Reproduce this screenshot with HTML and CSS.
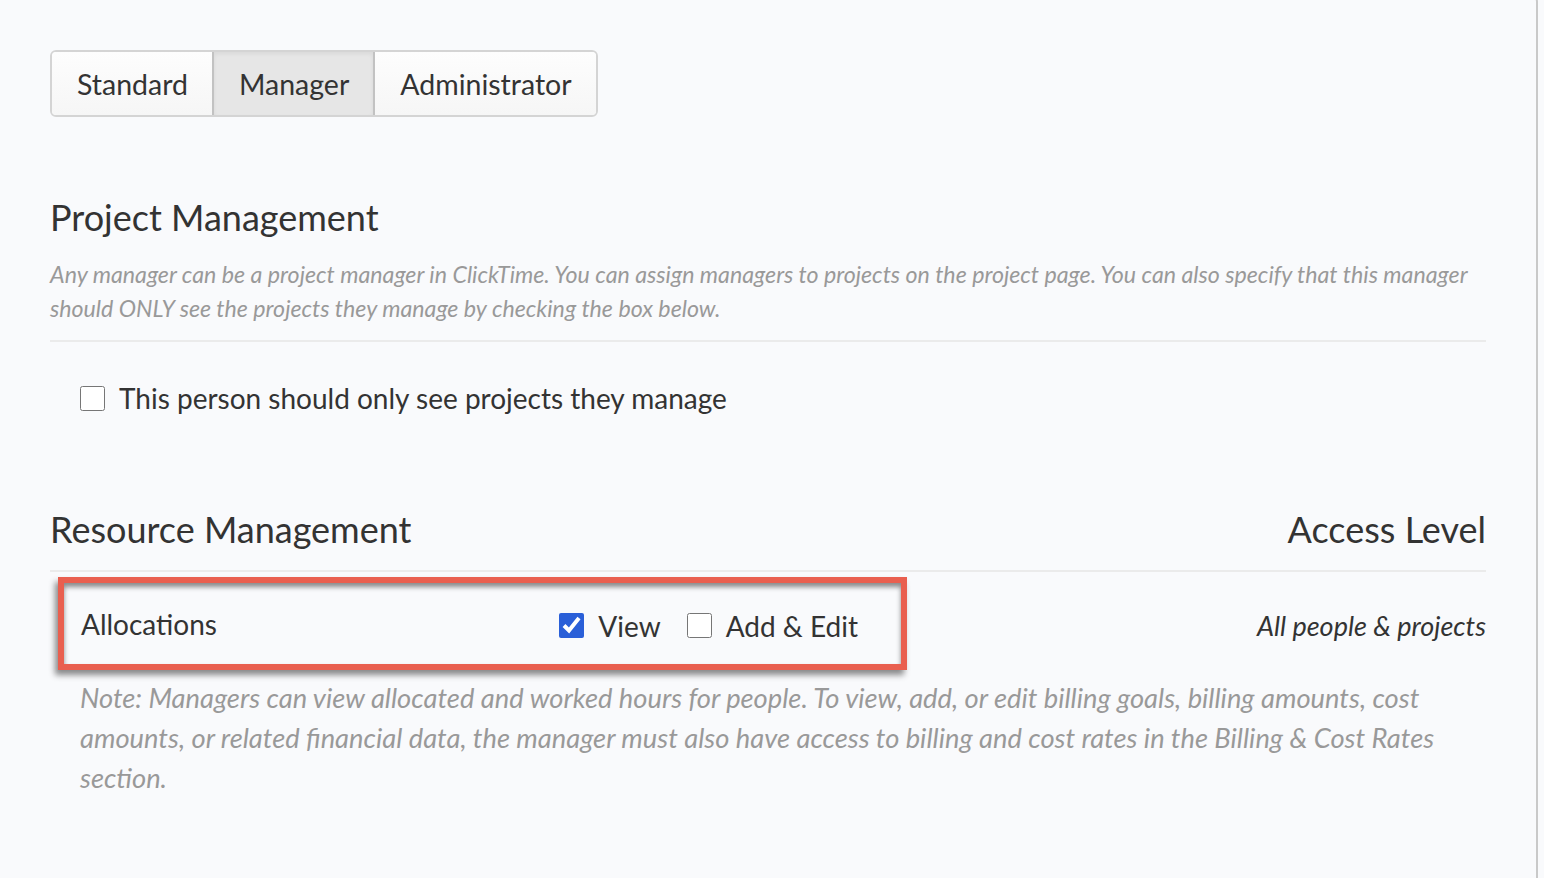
FILE: index.html
```html
<!DOCTYPE html>
<html lang="en-us">

<head>
<meta charset="utf-8">
<title>Manager Permissions</title>
<link rel="stylesheet" href="styles.css">
</head>

<body>

<div class="panel">

    <div class="roleTabs">
        <button class="roleTab">Standard</button>
        <button class="roleTab active">Manager</button>
        <button class="roleTab">Administrator</button>
    </div>

    <section class="permSection projectSection">
        <h2 class="sectionTitle">Project Management</h2>
        <p class="sectionHelp">Any manager can be a project manager in ClickTime. You can assign managers to projects on the project page. You can also specify that this manager should ONLY see the projects they manage by checking the box below.</p>
        <label class="checkRow">
            <input type="checkbox" class="box">
            <span>This person should only see projects they manage</span>
        </label>
    </section>

    <section class="permSection resourceSection">
        <div class="sectionHead">
            <h2 class="sectionTitle">Resource Management</h2>
            <h2 class="sectionTitle">Access Level</h2>
        </div>
        <div class="permRow">
            <div class="highlight">
                <span class="permName">Allocations</span>
                <div class="permOptions">
                    <label class="option">
                        <input type="checkbox" class="box" checked>
                        <span>View</span>
                    </label>
                    <label class="option">
                        <input type="checkbox" class="box">
                        <span>Add &amp; Edit</span>
                    </label>
                </div>
            </div>
            <span class="accessLevel">All people &amp; projects</span>
        </div>
        <p class="permNote">Note: Managers can view allocated and worked hours for people. To view, add, or edit billing goals, billing amounts, cost amounts, or related financial data, the manager must also have access to billing and cost rates in the Billing &amp; Cost Rates section.</p>
    </section>

</div>

</body>

</html>
```

FILE: styles.css
```css
html, body {
    margin: 0;
    padding: 0;
    background-color: #f9fafc;
}
body {
    font-family: Lato, "Open Sans", sans-serif;
    color: #333;
    overflow: hidden;
}
.panel {
    box-sizing: border-box;
    width: 1538px;
    height: 886px;
    margin-top: -8px;
    padding: 56px 50px 0 50px;
    border-top: 2px solid #c9c9c9;
    border-right: 2px solid #c9c9c9;
    border-top-right-radius: 10px;
    background-color: #f9fafc;
}

/* role switcher */
.roleTabs {
    display: inline-flex;
    border: 2px solid #d4d4d4;
    border-radius: 6px;
    overflow: hidden;
    background-color: #fbfbfb;
}
.roleTab {
    font-family: Lato, sans-serif;
    font-size: 28.5px;
    color: #333;
    height: 63px;
    padding: 0 24px 0 25px;
    border: none;
    border-left: 2px solid #c2c2c2;
    background: linear-gradient(#fdfdfd, #f6f6f6);
}
.roleTab:first-child {
    border-left: none;
}
.roleTab.active {
    background: #e6e6e6;
    box-shadow: inset 0 2px 4px rgba(0, 0, 0, 0.06);
}

/* sections */
.permSection {
    width: 1436px;
}
.projectSection {
    margin-top: 80px;
}
.sectionTitle {
    font-size: 36px;
    font-weight: normal;
    color: #333;
    margin: 0;
    line-height: 40px;
}
.sectionHelp {
    font-size: 23.2px;
    font-style: italic;
    color: #999;
    line-height: 34px;
    margin: 20px 0 0 0;
    padding-bottom: 15px;
    border-bottom: 2px solid #ebebeb;
}
.checkRow {
    display: flex;
    align-items: center;
    gap: 14px;
    margin-top: 39px;
    padding-left: 30px;
    font-size: 28px;
}
.box {
    width: 25px;
    height: 25px;
    margin: 0;
    accent-color: #2a5fd8;
}

.resourceSection {
    margin-top: 94px;
}
.sectionHead {
    display: flex;
    justify-content: space-between;
    padding-bottom: 21px;
    border-bottom: 2px solid #ebebeb;
}
.permRow {
    display: flex;
    justify-content: space-between;
    align-items: center;
    margin-top: 5px;
}
.highlight {
    box-sizing: border-box;
    display: flex;
    align-items: center;
    justify-content: space-between;
    width: 849px;
    height: 93px;
    margin-left: 8px;
    padding: 4px 43px 0 17px;
    border: 6px solid #e95f4f;
    box-shadow: -3px 5px 6px rgba(0, 0, 0, 0.45), inset 0 4px 5px rgba(0, 0, 0, 0.45);
}
.permName {
    font-size: 28px;
    margin-top: -4px;
}
.permOptions {
    display: flex;
    gap: 26px;
    font-size: 28px;
}
.option {
    display: flex;
    align-items: center;
    gap: 14px;
}
.accessLevel {
    font-size: 27px;
    font-style: italic;
    margin-top: 4px;
}
.permNote {
    font-size: 27.3px;
    font-style: italic;
    color: #999;
    line-height: 40px;
    margin: 8px 0 0 0;
    padding-left: 30px;
    padding-right: 40px;
}
```
